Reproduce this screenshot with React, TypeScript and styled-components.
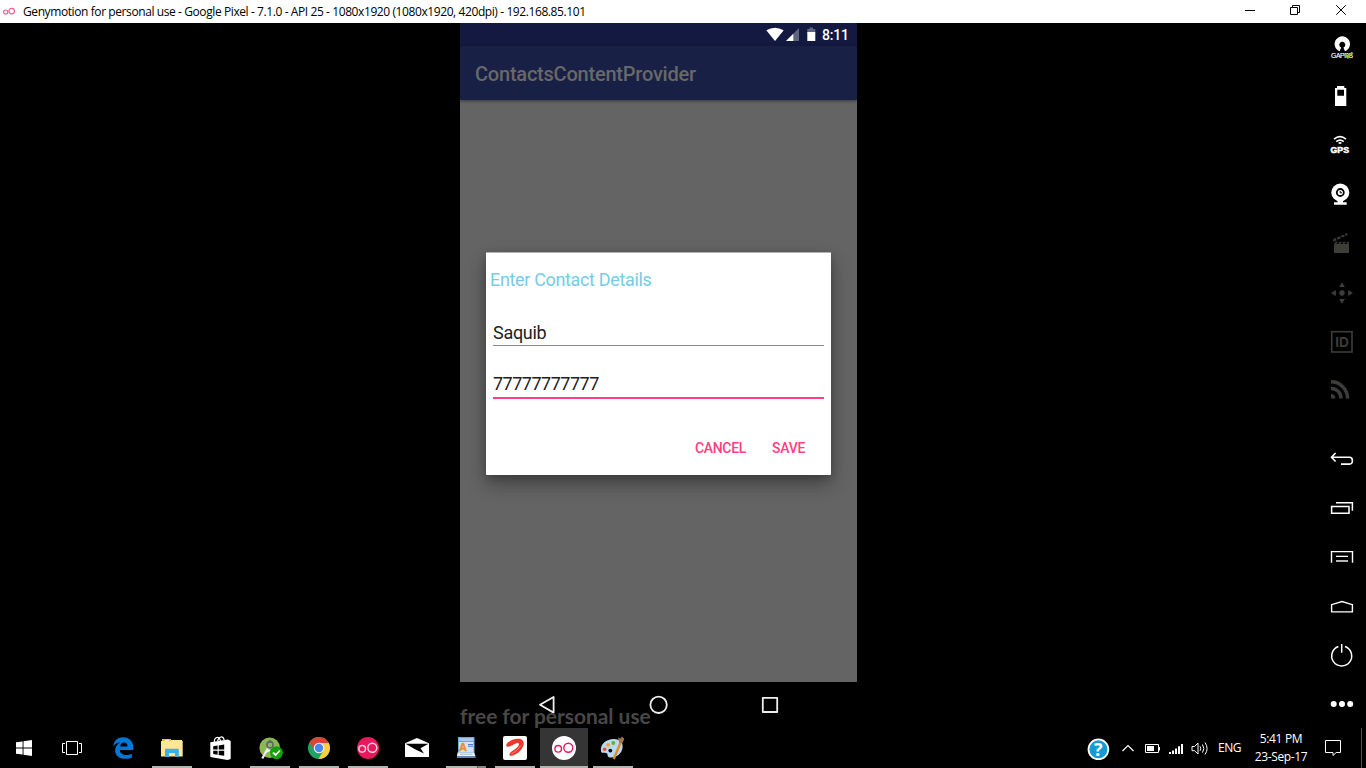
import React from "react";
import styled, { createGlobalStyle, css } from "styled-components";

const GlobalStyle = createGlobalStyle`
  * { box-sizing: border-box; }
  html, body { margin: 0; padding: 0; background: #000; overflow: hidden; }
  svg { display: block; flex: none; }
`;

const pink = "#ff4081";
const dim = "#3d3d3a";

const Screen = styled.div`
  width: 1366px;
  height: 768px;
  display: flex;
  flex-direction: column;
  background: #000;
  overflow: hidden;
  font-family: "Open Sans", "Noto Sans", sans-serif;
`;

/* ---------- window title bar ---------- */

const TitleBar = styled.header`
  height: 23px;
  flex: none;
  display: flex;
  align-items: center;
  padding-left: 3px;
  background: #fff;
`;

const WindowTitle = styled.h1`
  margin: 0 0 0 6px;
  flex: 1;
  font-size: 12px;
  font-weight: 400;
  line-height: 22px;
  letter-spacing: -0.407px;
  white-space: nowrap;
  color: #000;
`;

const WindowButtons = styled.div`
  display: flex;
`;

/* ---------- emulator area ---------- */

const Workspace = styled.main`
  height: 705px;
  flex: none;
  display: flex;
`;

const Stage = styled.div`
  flex: 1;
  display: flex;
  padding-left: 460px;
`;

const Phone = styled.section`
  position: relative;
  width: 397px;
  display: flex;
  flex-direction: column;
  font-family: Roboto, sans-serif;
`;

const StatusBar = styled.div`
  height: 23px;
  display: flex;
  align-items: center;
  justify-content: flex-end;
  padding-right: 7px;
  background: #141941;
`;

const Clock = styled.span`
  width: 28px;
  margin-left: 6px;
  font-size: 14px;
  font-weight: 500;
  line-height: 23px;
  letter-spacing: -0.2px;
  padding-top: 2px;
  color: #fff;
`;

const AppBar = styled.div`
  position: relative;
  height: 54px;
  padding: 2px 0 0 15px;
  display: flex;
  align-items: center;
  background: #192046;
  box-shadow: 0 1px 3px rgba(0, 0, 0, 0.45);
  font-size: 20px;
  font-weight: 500;
  letter-spacing: -0.22px;
  color: #686868;
`;

const Content = styled.div`
  height: 582px;
  padding: 152px 26px 0;
  background: #646464;
`;

const Dialog = styled.form`
  height: 223px;
  padding: 16px 7px 0;
  display: flex;
  flex-direction: column;
  background: #fff;
  border-top: 1px solid #b2b2b2;
  border-radius: 1px;
  box-shadow: 0 9px 20px rgba(0, 0, 0, 0.33), 0 3px 8px rgba(0, 0, 0, 0.18);
`;

const DialogTitle = styled.h2`
  margin: 0 0 0 -3px;
  height: 22px;
  font-size: 18px;
  font-weight: 400;
  line-height: 22px;
  letter-spacing: -0.34px;
  color: #76cbe8;
`;

const Field = styled.div<{ $focused?: boolean }>`
  height: ${(p) => (p.$focused ? 26 : 24)}px;
  margin-top: ${(p) => (p.$focused ? 27 : 31)}px;
  font-size: 18px;
  line-height: 22px;
  letter-spacing: ${(p) => (p.$focused ? -0.5 : -0.3)}px;
  color: #212121;
  border-bottom: ${(p) => (p.$focused ? `2px solid ${pink}` : "1px solid #888")};
`;

const DialogActions = styled.div`
  display: flex;
  justify-content: flex-end;
  gap: 26px;
  margin-top: 39px;
  padding-right: 19px;
`;

const ActionButton = styled.button.attrs({ type: "button" })`
  padding: 0;
  border: 0;
  background: none;
  font: 500 14px/20px Roboto, sans-serif;
  letter-spacing: -0.3px;
  color: ${pink};
`;

const NavBar = styled.div`
  height: 46px;
  background: #000;
`;

const Watermark = styled.div`
  position: absolute;
  left: 0;
  bottom: -1px;
  font: 700 20.9px/26px Lato, sans-serif;
  color: #484848;
  white-space: nowrap;
`;

const SideBar = styled.aside`
  width: 50px;
  display: flex;
  flex-direction: column;
  justify-content: space-between;
`;

/* ---------- taskbar ---------- */

const TaskBar = styled.footer`
  position: relative;
  height: 40px;
  flex: none;
  display: flex;
  background: #000;
  color: #fff;
`;

const TaskItem = styled.div<{ $running?: boolean; $active?: boolean; $stacked?: boolean; $gap?: number }>`
  width: 48px;
  height: 40px;
  margin-right: ${(p) => p.$gap ?? 1}px;
  background: ${(p) => (p.$active ? "#353535" : "transparent")};
  ${(p) =>
    p.$running &&
    css`
      position: relative;
      &::after {
        content: "";
        position: absolute;
        left: ${p.$active ? 0 : 4}px;
        right: ${p.$active ? 0 : 4}px;
        bottom: 0;
        height: 2px;
        background: ${p.$stacked
          ? "linear-gradient(90deg, #b4b4ae 31px, #555 31px, #555 32px, #888883 32px)"
          : "#b4b4ae"};
      }
    `}
`;

const Tray = styled.div`
  margin-left: auto;
  display: flex;
`;

const Language = styled.div`
  width: 36px;
  font-size: 12px;
  line-height: 39px;
  letter-spacing: -0.5px;
`;

const DateTime = styled.time`
  width: 54px;
  display: flex;
  flex-direction: column;
  align-items: center;
  padding-top: 2px;
  font-size: 12px;
  line-height: 18px;
  letter-spacing: -0.35px;
  white-space: nowrap;
`;

const ShowDesktop = styled.div`
  width: 5px;
  border-left: 1px solid #555;
`;

/* ---------- drawings ---------- */

const Slot = ({ children }: { children: React.ReactNode }) => (
  <svg width="50" height="49" viewBox="0 0 50 49" fill="none">{children}</svg>
);

const TaskIcon = ({ children }: { children: React.ReactNode }) => (
  <svg width="48" height="40" viewBox="0 0 48 40" fill="none">{children}</svg>
);

const Caption = ({ children }: { children: React.ReactNode }) => (
  <svg width="46" height="23" viewBox="0 0 46 23" fill="none" stroke="#000">{children}</svg>
);

const Rings = ({ color, width = 1.4 }: { color: string; width?: number }) => (
  <g stroke={color} strokeWidth={width}>
    <circle cx="18.2" cy="20.8" r="3.3" />
    <circle cx="28.3" cy="19.8" r="4.5" />
  </g>
);

const WinLogo = ({ transform }: { transform?: string }) => (
  <path transform={transform} fill="#fff" d="M0 2.3 6.6 1.4V7.5H0zM7.5 1.2 16 0V7.5H7.5zM0 8.5H6.6V14.6L0 13.7zM7.5 8.5H16V16L7.5 14.8z" />
);

const SensorIcons = () => (
  <div>
    <Slot>
      <path d="M23.7 28.3A7.7 7.7 0 1 1 28.9 28.3L27.5 24.6A3 3 0 1 0 25.1 24.6z" fill="#fff" />
      <text x="15" y="34.8" fontSize="6.8" fontFamily="Liberation Sans, sans-serif" fill="#fff" stroke="#fff" strokeWidth=".15" textLength="22">GAPPS</text>
      <path d="M28.8 31.3 31.8 34.3 36.5 29.5" stroke="#93c11f" strokeWidth="2.4" />
    </Slot>
    <Slot>
      <path fill="#fff" fillRule="evenodd" d="M21 14H28.3V16H30.3V34H19V16H21zM21.3 17.7V23.7H28V17.7z" />
    </Slot>
    <Slot>
      <g stroke="#fff" strokeWidth="1.6">
        <path d="M18 18.2Q24 13.2 30 18.2" />
        <path d="M20.2 20.7Q24 17.4 27.8 20.7" />
      </g>
      <path d="M22 22Q24 20.2 26 22L24 23.2z" fill="#fff" />
      <text x="14.5" y="31.8" fontSize="8.2" fontWeight="700" fontFamily="Liberation Sans, sans-serif" fill="#fff" stroke="#fff" strokeWidth=".5" textLength="18.5" lengthAdjust="spacingAndGlyphs">GPS</text>
    </Slot>
    <Slot>
      <circle cx="24.3" cy="22.5" r="9" fill="#fff" />
      <circle cx="24.3" cy="22.5" r="3.5" stroke="#000" strokeWidth="1.8" />
      <path d="M24.2 21V22.8H26" stroke="#000" strokeWidth="1" />
      <path fill="#fff" d="M21.5 30H27V32.3H30.7V34.7H18V32.3H21.5z" />
    </Slot>
    <Slot>
      <path fill={dim} d="M18 25H33V34H18zM18 24.8 19.5 22.8H22L20.5 24.8zM22 24.8 23.5 22.8H26L24.5 24.8zM26 24.8 27.5 22.8H30L28.5 24.8zM30 24.8 31.5 22.8H33V24.8z" />
      <path fill={dim} d="M17 22.8 17.4 19.9 19.5 19 20.7 21.3zM21.8 20.7 20.7 18.5 23.3 17.4 25.2 19.1zM26.2 18.6 24.5 16.9 27.2 15.8 29 17.3zM30 16.8 28.4 15.3 30.8 14.2 31.8 16z" />
    </Slot>
    <Slot>
      <circle cx="26" cy="25" r="2.7" fill={dim} />
      <path fill={dim} d="M26 14.2 28.9 18.9H23.1zM26 35.8 28.9 31.1H23.1zM15 25 19.9 22V28zM37 25 32.1 22V28z" />
    </Slot>
    <Slot>
      <rect x="15.7" y="14.7" width="20.3" height="20.3" stroke={dim} strokeWidth="1.6" />
      <text x="19.2" y="30.2" fontSize="14" fontWeight="700" fontFamily="Liberation Sans, sans-serif" fill={dim} textLength="13.6" lengthAdjust="spacingAndGlyphs">ID</text>
    </Slot>
    <Slot>
      <g stroke={dim} strokeWidth="3.5">
        <path d="M15 15.8A16.6 16.6 0 0 1 31.6 32.4" />
        <path d="M15 22.4A10 10 0 0 1 25 32.4" />
      </g>
      <path d="M15 28A4.4 4.4 0 0 1 19.4 32.4H15z" fill={dim} />
    </Slot>
  </div>
);

const ControlIcons = () => (
  <div>
    <Slot>
      <path d="M19.6 19 15.5 23.3 19.6 27.5M15.5 23.3H33.5Q36.4 23.3 36.4 26.7T33.5 30.1H25" stroke="#fff" strokeWidth="1.6" />
    </Slot>
    <Slot>
      <path d="M15.6 23.6H33V30.2H15.6zM20 19.7H36.4V27.7" stroke="#fff" strokeWidth="1.5" />
    </Slot>
    <Slot>
      <path d="M15.5 30.7V19.6H36.5V30.7M20 24.4H32" stroke="#fff" strokeWidth="1.4" />
      <path d="M20 29H32" stroke="#b5b5b5" strokeWidth="2" />
    </Slot>
    <Slot>
      <path d="M15.6 30.9V23.7L26 20.5 36.4 23.7V30.9z" stroke="#fff" strokeWidth="1.4" />
    </Slot>
    <Slot>
      <path d="M22.4 16.5A10 10 0 1 0 29 16.5M25.7 14V22.7" stroke="#fff" strokeWidth="1.5" />
    </Slot>
    <Slot>
      <g fill="#fff">
        <circle cx="17.7" cy="25" r="3" />
        <circle cx="26" cy="25" r="3" />
        <circle cx="34.2" cy="25" r="3" />
      </g>
    </Slot>
  </div>
);

const StatusIcons = () => (
  <svg width="50" height="23" viewBox="766 23 50 23">
    <path fill="#fff" d="M766.3 30.3Q775 25.2 783.7 30.3L775 41z" />
    <path fill="#60647f" d="M799 28V41H786z" />
    <path fill="#fff" d="M793.3 33.7V41H786z" />
    <path fill="#60647f" d="M809.5 27.5H813V29H815.3V33H807.3V29H809.5z" />
    <path fill="#fff" d="M807.3 32H815.3V41H807.3z" />
  </svg>
);

const NavIcons = () => (
  <svg width="397" height="46" viewBox="460 682 397 46" fill="none" stroke="#eee" strokeWidth="1.8" strokeLinejoin="round">
    <path d="M553.6 697V712.6L540 704.8z" />
    <circle cx="658.6" cy="704.8" r="8.2" />
    <rect x="762.8" y="697.8" width="14.4" height="14.2" />
  </svg>
);

const TrayIcons = () => (
  <svg width="134" height="40" viewBox="1084 728 134 40" fill="none">
    <circle cx="1098.4" cy="749.3" r="10.8" fill="#fff" />
    <circle cx="1098.4" cy="749.3" r="9" fill="#149bd7" />
    <text x="1098.4" y="755.8" textAnchor="middle" fontSize="18" fontWeight="700" fontFamily="Open Sans, sans-serif" fill="#fff">?</text>
    <path d="M1122.5 751 1128 745.5 1133.5 751" stroke="#fff" strokeWidth="1.2" />
    <path d="M1145.5 744.5H1158.5V752.5H1145.5z" stroke="#fff" />
    <path d="M1147 746H1154V751H1147zM1159 747H1160V750.5H1159z" fill="#fff" />
    <path d="M1169 752H1171V754H1169zM1172 750.5H1174V754H1172zM1175 748.5H1177V754H1175zM1178 746.3H1180V754H1178zM1181 744H1183V754H1181z" fill="#fff" />
    <path d="M1192 746.5H1194.5L1198 743V754L1194.5 750.7H1192zM1200 746.3Q1201.6 748.5 1200 750.8M1202.5 744.5Q1205.2 748.5 1202.5 752.6M1205 742.5Q1209.2 748.5 1205 754.5" stroke="#fff" />
  </svg>
);

export default function App() {
  return (
    <Screen>
      <GlobalStyle />
      <TitleBar>
        <svg width="14" height="23" viewBox="0 0 14 23" fill="none" stroke="#e0658f" strokeWidth="1.2">
          <circle cx="2.7" cy="12.1" r="2.1" />
          <circle cx="8.7" cy="11.1" r="2.8" />
        </svg>
        <WindowTitle>Genymotion for personal use - Google Pixel - 7.1.0 - API 25 - 1080x1920 (1080x1920, 420dpi) - 192.168.85.101</WindowTitle>
        <WindowButtons>
          <Caption><path d="M17 10.5H27" /></Caption>
          <Caption><path d="M16.5 7.5H23.5V14.5H16.5zM18.5 7.5V5.5H25.5V12.5H23.5" /></Caption>
          <Caption><path d="M16.2 5.2 25.8 14.8M25.8 5.2 16.2 14.8" /></Caption>
        </WindowButtons>
      </TitleBar>

      <Workspace>
        <Stage>
          <Phone>
            <StatusBar>
              <StatusIcons />
              <Clock>8:11</Clock>
            </StatusBar>
            <AppBar>ContactsContentProvider</AppBar>
            <Content>
              <Dialog>
                <DialogTitle>Enter Contact Details</DialogTitle>
                <Field>Saquib</Field>
                <Field $focused>77777777777</Field>
                <DialogActions>
                  <ActionButton>CANCEL</ActionButton>
                  <ActionButton>SAVE</ActionButton>
                </DialogActions>
              </Dialog>
            </Content>
            <NavBar><NavIcons /></NavBar>
            <Watermark>free for personal use</Watermark>
          </Phone>
        </Stage>
        <SideBar>
          <SensorIcons />
          <ControlIcons />
        </SideBar>
      </Workspace>

      <TaskBar>
        <TaskItem $gap={0}>
          <TaskIcon><WinLogo transform="translate(16 12)" /></TaskIcon>
        </TaskItem>
        <TaskItem $gap={3}>
          <TaskIcon>
            <path d="M18.5 13.5H29.5V26.5H18.5zM17 15.5H14.5V24.5H17M31 15.5H33.5V24.5H31" stroke="#fff" />
          </TaskIcon>
        </TaskItem>
        <TaskItem>
          <TaskIcon>
            <path fill="#0078d7" d="M14 18.3C15.1 12.4 19 9.3 24.2 9.3C30.5 9.3 34.3 13.7 34.3 19.3V22H20.8C21 25.5 24 27 27 27C29.3 27 31.2 26.4 32.8 25.4V29.4C30.8 30.4 28.5 30.8 26 30.8C20 30.8 16.1 27.2 16.1 22.5C16.1 19 18.2 15.9 21.5 14.3C18.3 14.5 15.8 16 14 18.3zM21 18.4H28.5C28.5 15.7 27.2 14.4 25 14.4C22.7 14.4 21.4 16.1 21 18.4z" />
          </TaskIcon>
        </TaskItem>
        <TaskItem $running>
          <TaskIcon>
            <path fill="#f2b92a" d="M14 11H23V14H14z" />
            <path fill="#ffe596" d="M13 13H34.7V28.5H13zM23 12H34V13H23z" />
            <path fill="#fff" d="M17 11.8H21V12.8H17z" />
            <path fill="#38b2e8" d="M17 21.7Q17 20.7 18 20.7H29.8Q30.8 20.7 30.8 21.7V29H27V25H21V29H17z" />
          </TaskIcon>
        </TaskItem>
        <TaskItem>
          <TaskIcon>
            <path d="M17.2 14C17 10 20.5 8 22.5 10.5L24 14M20.5 13C22 8.2 26 7.5 27.2 12" stroke="#fff" strokeWidth="1.2" />
            <path fill="#fff" d="M13.3 14.3 31 11.5 33.7 13V31L30.5 32 13.3 29z" />
            <path fill="#000" d="M16.2 18.3 20.6 17.5V21.6H16.2zM21.7 17.4 27.2 16.5V21.6H21.7zM16.2 22.7H20.6V26.7L16.2 26zM21.7 22.7H27.2V27.8L21.7 26.9z" />
          </TaskIcon>
        </TaskItem>
        <TaskItem $running>
          <TaskIcon>
            <circle cx="23.7" cy="19.7" r="10.3" fill="#8bb94f" />
            <path d="M23 18 16.3 30.5M25 18 28 24" stroke="#e8eaec" strokeWidth="2.2" />
            <path d="M19 24.5 24 22" stroke="#fff" strokeWidth="1.4" />
            <circle cx="24" cy="16.7" r="3" stroke="#606b6a" strokeWidth="1.8" />
            <path d="M24 12V15" stroke="#606b6a" strokeWidth="2" />
            <circle cx="30.4" cy="24.7" r="6.5" fill="#13a10e" />
            <path d="M27 24.5 29.6 27 33.9 22.5" stroke="#fff" strokeWidth="1.8" />
          </TaskIcon>
        </TaskItem>
        <TaskItem $running>
          <TaskIcon>
            <circle cx="24" cy="20" r="11" fill="#1da462" />
            <path fill="#db4437" d="M14.4 14.6A11 11 0 0 1 33.8 15H24L19.4 22.6z" />
            <path fill="#ffcd40" d="M33.8 15A11 11 0 0 1 23.6 31L28.4 22.5 24 15z" />
            <circle cx="24" cy="20" r="5.3" fill="#f1f1f1" />
            <circle cx="24" cy="20" r="4.2" fill="#4587f3" />
          </TaskIcon>
        </TaskItem>
        <TaskItem $running>
          <TaskIcon>
            <circle cx="24" cy="20" r="11" fill="#e6195f" />
            <Rings color="#ffd5e3" />
          </TaskIcon>
        </TaskItem>
        <TaskItem>
          <TaskIcon>
            <path fill="#fff" d="M12 15.3 24 10 36 15.3V29H12z" />
            <path fill="#000" d="M12.5 15.8H35.5L27.5 20.2 31 25.5 22.5 21.5z" />
          </TaskIcon>
        </TaskItem>
        <TaskItem $running $stacked>
          <TaskIcon>
            <path fill="#6fa5dc" d="M16 9H32.5V26H16z" />
            <path fill="#a4c9ee" d="M17 10H31.5V13H17z" />
            <path fill="#cfe2f6" d="M17 14H31.5V24H17z" />
            <path fill="#eef3f9" d="M15.5 24.5H32L33.5 28H15z" />
            <path fill="#5d86b8" d="M15 28H33.5V30H15z" />
            <path d="M18 26.2H30.5" stroke="#8fa9c6" strokeWidth=".8" />
            <text x="17" y="23" fontFamily="Liberation Sans, sans-serif" fontSize="11" fontWeight="700" fill="#f08a2c" stroke="#f08a2c" strokeWidth=".4">A</text>
            <path d="M26 16.5H31M26 18.2H31" stroke="#4d7ed2" strokeWidth="1" />
          </TaskIcon>
        </TaskItem>
        <TaskItem $running>
          <TaskIcon>
            <rect x="12" y="8" width="24" height="24" rx="2" fill="#fff" />
            <path fill="#e8392c" d="M15.2 17.3C15.2 14.5 21.5 10.8 27 10.8C31.5 10.8 33.3 13.3 32.6 16.8C31.6 21.8 26.5 26.3 21 27.7C18.6 28.2 17.8 26.8 19 25C20 23.5 22.3 22.6 24.3 21C26.8 19 28.6 16.8 27.8 15.5C26.8 14.1 23.8 15.8 21.3 17.3C18.5 18.9 15.2 19.7 15.2 17.3z" />
            <path d="M20.3 26Q27 22.8 29.8 17.5" stroke="#f79a86" strokeWidth=".8" />
          </TaskIcon>
        </TaskItem>
        <TaskItem $running $active>
          <TaskIcon>
            <circle cx="24" cy="20" r="12" fill="#fff" />
            <Rings color="#e6195f" />
          </TaskIcon>
        </TaskItem>
        <TaskItem $running>
          <TaskIcon>
            <path fill="#b9d9ee" d="M12 23C11 16 17 11 25 11C31 11 34.5 14.5 33.5 20C32.5 26 27 30 21 29.5C17.5 29.2 19.5 26 17.5 25.3C15 24.6 12.5 26 12 23z" />
            <circle cx="21.3" cy="22.6" r="1.9" fill="#000" />
            <circle cx="15.6" cy="21.3" r="1.8" fill="#e8492f" />
            <circle cx="19" cy="16.8" r="1.9" fill="#f0a42a" />
            <circle cx="24.3" cy="15" r="1.9" fill="#5cb531" />
            <path d="M31.5 15 24.7 31" stroke="#e28a2e" strokeWidth="2.4" />
            <path fill="#9c7650" d="M29 9.5 31.5 10.5 33 8.5 35.3 11 33.2 15.5 30.3 15z" />
          </TaskIcon>
        </TaskItem>

        <Tray>
          <TrayIcons />
          <Language>ENG</Language>
          <DateTime>
            <span>5:41 PM</span>
            <span>23-Sep-17</span>
          </DateTime>
          <svg width="53" height="40" viewBox="1308 728 53 40" fill="none" stroke="#fff">
            <path d="M1325.5 740.5H1340.5V752.5H1336.2L1333 755.5V752.5H1325.5z" />
          </svg>
          <ShowDesktop />
        </Tray>
      </TaskBar>
    </Screen>
  );
}
